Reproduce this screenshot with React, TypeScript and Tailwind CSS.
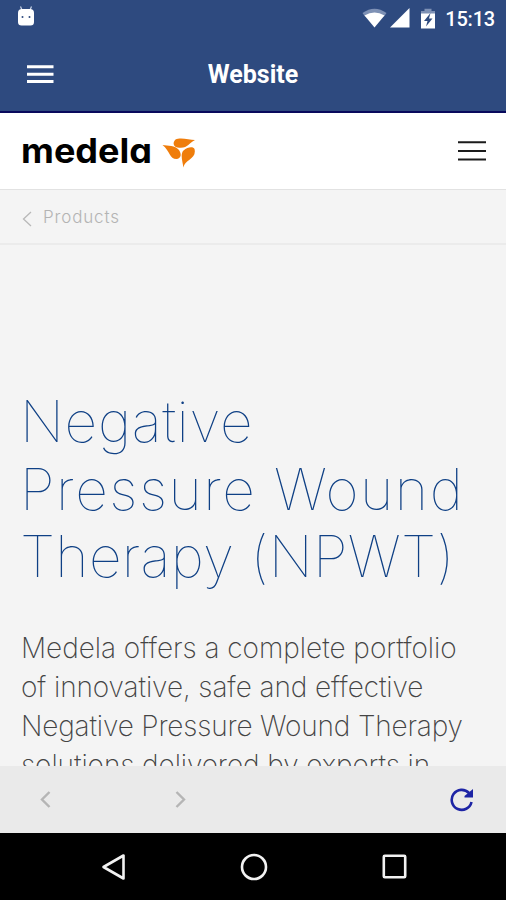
import React from "react";

const titleLines = [
  { text: "Negative", className: "tracking-[0.65px]" },
  { text: "Pressure Wound", className: "tracking-[1.5px]" },
  { text: "Therapy (NPWT)", className: "tracking-[0.25px]" },
];

const introLines = [
  { text: "Medela offers a complete portfolio", className: "tracking-[-0.04px]" },
  { text: "of innovative, safe and effective", className: "tracking-[-0.09px]" },
  { text: "Negative Pressure Wound Therapy", className: "tracking-[-0.17px]" },
  { text: "solutions delivered by experts in", className: "tracking-[-0.08px]" },
];

const StatusBar = () => (
  <div className="flex h-[37px] items-center justify-between pl-[17px] pr-[11px]">
    <svg width="18" height="21" viewBox="0 0 18 21" className="mb-[5px]">
      <path d="M3.5 0.5L5 4M14.5 0.5L13 4" stroke="#c9d3e6" strokeWidth="1.2" />
      <path d="M1 7Q1 3 5 3H13Q17 3 17 7V16Q17 19.500 13.500 19.500H4.500Q1 19.500 1 16Z" fill="#fff" />
      <circle cx="5.500" cy="11" r="1" fill="#2e4a7f" />
      <circle cx="12.500" cy="11" r="1" fill="#2e4a7f" />
    </svg>
    <div className="flex items-center">
      <svg width="25" height="21" viewBox="0 0 25 21">
        <path d="M0.500 5Q12.500 -3.500 24.500 5L22 8.500H3Z" fill="#7e91b5" />
        <path d="M2.500 7.500Q12.500 1.500 22.500 7.500L12.500 19.500Z" fill="#fff" />
      </svg>
      <svg width="20" height="21" viewBox="0 0 20 21" className="ml-[3px]">
        <path d="M19.500 0V19.500H0Z" fill="#fff" />
      </svg>
      <svg width="14" height="21" viewBox="0 0 14 21" className="ml-[11px]">
        <path d="M0 3H3.500V0.800H10.500V3H14V7H0Z" fill="#7e91b5" />
        <path d="M0 5.500H14V20.500H0Z" fill="#fff" />
        <path d="M9.500 5L3 13H6.500L5 18.500L11.500 10.500H8Z" fill="#2e4a7f" />
      </svg>
      <span className="ml-[10px] text-[20px] font-medium leading-none tracking-[-0.2px] text-white">15:13</span>
    </div>
  </div>
);

const AppBar = () => (
  <div className="grid h-[76px] grid-cols-3 items-center border-b-2 border-[#08095c] px-[27px]">
    <svg width="27" height="19" viewBox="0 0 27 19">
      <path d="M0 1.800H26.500M0 9.200H26.500M0 16.600H26.500" stroke="#fff" strokeWidth="3" />
    </svg>
    <h1 className="text-center text-[25px] font-bold leading-none text-white">Website</h1>
  </div>
);

const SiteHeader = () => (
  <div className="flex h-[77px] items-center justify-between border-b border-[#e2e2e2] bg-white pl-[20.5px] pr-5">
    <div className="flex items-center">
      <span className="w-[141px] origin-left scale-x-106 whitespace-nowrap font-[Inter] text-[34px] font-bold leading-[40px] text-black [font-feature-settings:'cv11']">
        medela
      </span>
      <svg width="34" height="31" viewBox="0 0 34 31" fill="#ef7d0b" className="mt-[5px]">
        <path d="M33 2C27 1.500 18 -1 13.500 1.500C10.500 4.500 11 8.500 15.500 9.500C26 11 26 5.500 33 2Z" />
        <path d="M0.500 7C6 8 13 7 17 12C20 16.500 19 20.500 14.500 21C7.500 21 8 13 0.500 7Z" />
        <path d="M21.500 29.500C20.500 24 18 16 21.500 12.500C26 8.500 31.500 8.500 32.500 11C35 21.500 22.500 21.500 21.500 29.500Z" />
      </svg>
    </div>
    <svg width="28" height="20" viewBox="0 0 28 20">
      <path d="M0 1.200H28M0 10H28M0 18.500H28" stroke="#1b1b1b" strokeWidth="2" />
    </svg>
  </div>
);

const Breadcrumb = () => (
  <div className="flex h-[55px] items-center border-b-2 border-[#ebebeb] pl-[22px]">
    <svg width="10" height="16" viewBox="0 0 10 16" className="mt-[5px]">
      <path d="M9 1L1.500 8L9 15" fill="none" stroke="#b8b8b8" strokeWidth="1.300" />
    </svg>
    <span className="ml-[11px] mt-[2px] font-[Inter] text-[17px] font-light leading-none tracking-[0.85px] text-[#b3b3b3]">
      Products
    </span>
  </div>
);

const BrowserBar = () => (
  <div className="flex h-[67px] shrink-0 items-center bg-[#eaeaea] pl-10 pr-8">
    <svg width="11" height="17" viewBox="0 0 11 17">
      <path d="M9.500 1L2 8.500L9.500 16" fill="none" stroke="#b5b5b5" strokeWidth="2.400" />
    </svg>
    <svg width="11" height="17" viewBox="0 0 11 17" className="ml-[124px]">
      <path d="M1.500 1L9 8.500L1.500 16" fill="none" stroke="#b5b5b5" strokeWidth="2.400" />
    </svg>
    <svg width="25" height="24" viewBox="0 0 25 24" className="ml-auto">
      <path d="M22.500 14A10 10 0 1 1 20 5" fill="none" stroke="#1d24a5" strokeWidth="2.600" />
      <path d="M24 1V9.500H15.500V8Z" fill="#1d24a5" />
    </svg>
  </div>
);

const NavBar = () => (
  <div className="flex h-[67px] shrink-0 items-center justify-between bg-black pl-[101px] pr-[99px]">
    <svg width="25" height="28" viewBox="0 0 25 28">
      <path d="M22.500 2.500V25.500L2.500 14Z" fill="none" stroke="#f2f2f2" strokeWidth="2.600" strokeLinejoin="round" />
    </svg>
    <svg width="28" height="28" viewBox="0 0 28 28">
      <circle cx="14" cy="14" r="12" fill="none" stroke="#f2f2f2" strokeWidth="2.600" />
    </svg>
    <svg width="25" height="25" viewBox="0 0 25 25">
      <rect x="1.800" y="1.800" width="21.400" height="21.400" rx="1" fill="none" stroke="#f2f2f2" strokeWidth="2.600" />
    </svg>
  </div>
);

const App = () => {
  return (
    <div className="flex h-[900px] w-[506px] flex-col overflow-hidden bg-[#f4f4f4] font-[Roboto,sans-serif]">
      <div className="bg-[#2e4a7f]">
        <StatusBar />
        <AppBar />
      </div>
      <SiteHeader />
      <Breadcrumb />
      <div className="min-h-0 flex-1 overflow-hidden pl-[20px] pt-[143px]">
        <h2 className="font-[Inter] text-[57px] font-thin leading-[67.5px] text-[#0f4085]">
          {titleLines.map((line) => (
            <span key={line.text} className="block">
              <span className={`whitespace-nowrap ${line.className}`}>{line.text}</span>
            </span>
          ))}
        </h2>
        <p className="ml-px mt-[38px] font-[Inter] text-[28px] font-extralight leading-[39.3px] text-[#444]">
          {introLines.map((line) => (
            <span key={line.text} className="block">
              <span className={`whitespace-nowrap ${line.className}`}>{line.text}</span>
            </span>
          ))}
        </p>
      </div>
      <BrowserBar />
      <NavBar />
    </div>
  );
};

export default App;
